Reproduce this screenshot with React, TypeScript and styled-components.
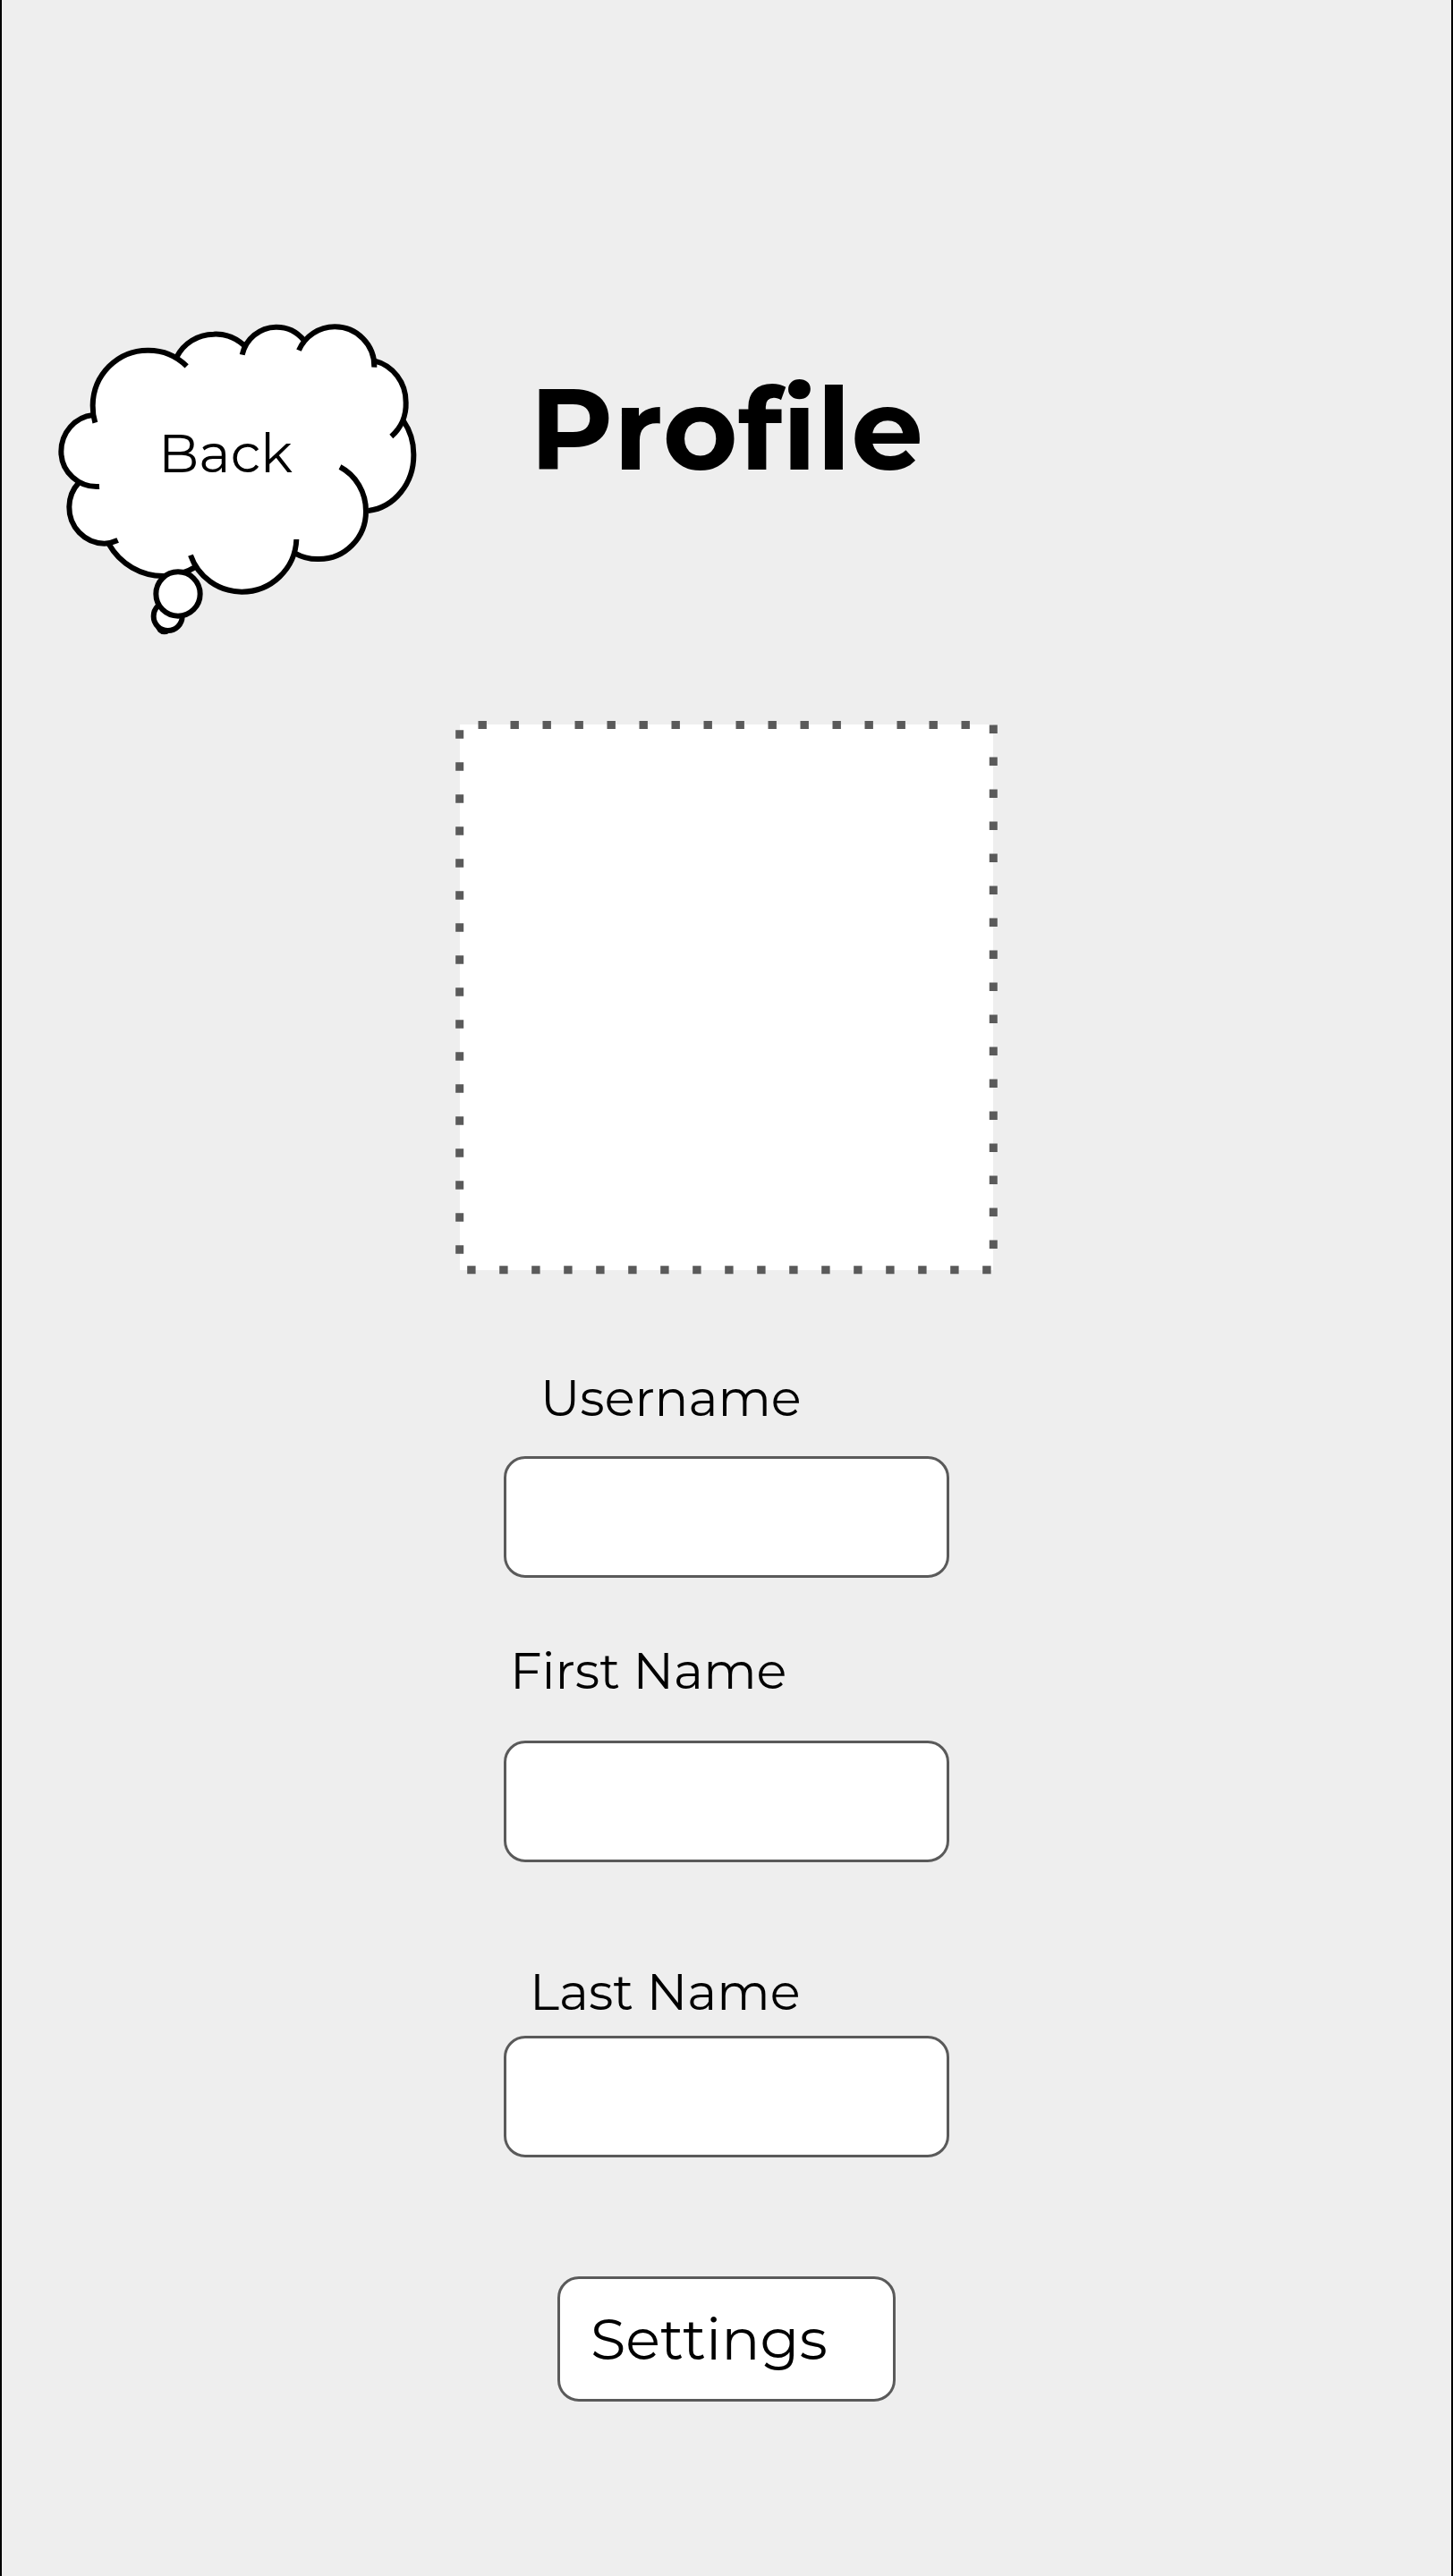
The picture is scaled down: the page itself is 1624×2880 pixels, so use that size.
import React from "react";
import styled, { createGlobalStyle } from "styled-components";

const GlobalStyle = createGlobalStyle`
  *, *::before, *::after { box-sizing: border-box; }
  body { margin: 0; background: #eeeeee; }
`;

const Page = styled.main`
  min-height: 100vh;
  padding: 350px 0 96px;
  display: flex;
  flex-direction: column;
  background: #eeeeee;
  border: solid #000000;
  border-width: 0 2px;
  color: #000000;
  font-family: Montserrat, Inter, "Open Sans", sans-serif;
  font-weight: 400;
`;

const Header = styled.header`
  display: grid;
  grid-template-columns: 1fr auto 1fr;
  align-items: start;
  margin-bottom: 90px;
`;

const Title = styled.h1`
  margin: 49px 0 0;
  font-size: 128px;
  line-height: 160px;
  font-weight: 700;
  font-kerning: none;
  font-variant-ligatures: none;
`;

const CloudButton = styled.button`
  position: relative;
  justify-self: start;
  width: 430px;
  height: 370px;
  margin: 0 0 0 48px;
  padding: 121px 0 0 127px;
  display: flex;
  align-items: flex-start;
  border: 0;
  background: none;
  color: inherit;
  font: inherit;
  font-size: 60px;
  line-height: 72px;
  cursor: pointer;
`;

const CloudArt = styled.svg`
  position: absolute;
  inset: 0;
  width: 100%;
  height: 100%;
`;

const CloudLabel = styled.span`
  position: relative;
`;

const Photo = styled.div`
  position: relative;
  align-self: center;
  width: 596px;
  max-width: 100%;
  height: 610px;
  background: #ffffff;
`;

const PhotoDots = styled.svg`
  position: absolute;
  inset: 0;
  width: 100%;
  height: 100%;
  overflow: visible;
`;

const Form = styled.form`
  align-self: center;
  width: 498px;
  max-width: 100%;
  display: flex;
  flex-direction: column;
`;

const Field = styled.div<{ $before: number; $gap: number; $indent: number }>`
  display: flex;
  flex-direction: column;
  gap: ${(p) => p.$gap}px;
  padding-top: ${(p) => p.$before}px;

  label {
    padding-left: ${(p) => p.$indent}px;
    font-size: 56px;
    line-height: 72px;
    white-space: nowrap;
  }
`;

const TextBox = styled.input`
  width: 100%;
  height: 136px;
  padding: 0 24px;
  border: 3px solid #5a5a5a;
  border-radius: 24px;
  background: #ffffff;
  color: inherit;
  font: inherit;
  font-size: 56px;
`;

const SettingsButton = styled.button`
  align-self: center;
  width: 378px;
  height: 140px;
  margin-top: 133px;
  padding: 0 34px;
  border: 3px solid #5a5a5a;
  border-radius: 24px;
  background: #ffffff;
  color: inherit;
  font: inherit;
  font-size: 64px;
  line-height: 78px;
  text-align: left;
  cursor: pointer;
`;

const puffs = [
  "M442 148A140 140 0 0 1 566 71A140 140 0 0 1 668 108",
  "M662 140A118 118 0 0 1 775 47A118 118 0 0 1 868 90",
  "M1105 160A138 142 0 0 1 1211 300A138 142 0 0 1 1162 414",
  "M852 125A132 132 0 0 1 972 46A132 132 0 0 1 1105 182",
  "M169 368A184 187 0 0 1 161 310A184 187 0 0 1 345 125A184 187 0 0 1 476 178",
  "M1203 362A172 187 0 0 1 1237 475A172 187 0 0 1 1085 663",
  "M990 516A157 165 0 0 1 1077 665A157 160 0 0 1 920 825A157 160 0 0 1 838 805",
  "M508 850A210 210 0 0 1 400 882A210 210 0 0 1 215 775",
  "M844 759A183 183 0 0 1 660 935A183 183 0 0 1 489 812",
  "M245 762A121 121 0 0 1 200 773A120 121 0 0 1 82 650A121 121 0 0 1 115 568",
  "M183 582A120 118 0 0 1 55 465A119 123 0 0 1 162 342",
];

const cloudBody =
  "M162 342A184 187 0 0 1 442 148A140 140 0 0 1 668 108A118 118 0 0 1 868 90A132 132 0 0 1 1105 160A138 142 0 0 1 1203 362A172 187 0 0 1 1078 663A157 160 0 0 1 838 805A183 183 0 0 1 508 850A210 210 0 0 1 215 775A121 121 0 0 1 115 568A120 120 0 0 1 162 342Z";

const fields = [
  { id: "username", label: "Username", before: 107, gap: 29, indent: 41 },
  { id: "first-name", label: "First Name", before: 68, gap: 42, indent: 7 },
  { id: "last-name", label: "Last Name", before: 109, gap: 13, indent: 29 },
];

export default function App() {
  return (
    <>
      <GlobalStyle />
      <Page>
        <Header>
          <CloudButton type="button">
            <CloudArt viewBox="0 0 1290 1110" aria-hidden="true">
              <path d={cloudBody} fill="#ffffff" />
              <g fill="none" stroke="#000000" strokeWidth="18">
                {puffs.map((d) => (
                  <path key={d} d={d} />
                ))}
              </g>
              <g fill="#ffffff" stroke="#000000" strokeWidth="18">
                <circle cx="401" cy="1049" r="20" />
                <circle cx="413" cy="1017" r="48" />
                <circle cx="447" cy="942" r="74" />
              </g>
            </CloudArt>
            <CloudLabel>Back</CloudLabel>
          </CloudButton>
          <Title>Profile</Title>
        </Header>

        <Photo role="img" aria-label="Profile photo">
          <PhotoDots viewBox="0 0 596 610" aria-hidden="true">
            <path
              d="M596.3 0.5V609.8H-0.3V0.5Z"
              fill="none"
              stroke="#5a5a5a"
              strokeWidth="9"
              strokeDasharray="9.4 26.6"
            />
          </PhotoDots>
        </Photo>

        <Form onSubmit={(e: React.FormEvent) => e.preventDefault()}>
          {fields.map((f) => (
            <Field key={f.id} $before={f.before} $gap={f.gap} $indent={f.indent}>
              <label htmlFor={f.id}>{f.label}</label>
              <TextBox id={f.id} name={f.id} type="text" />
            </Field>
          ))}
          <SettingsButton type="button">Settings</SettingsButton>
        </Form>
      </Page>
    </>
  );
}
